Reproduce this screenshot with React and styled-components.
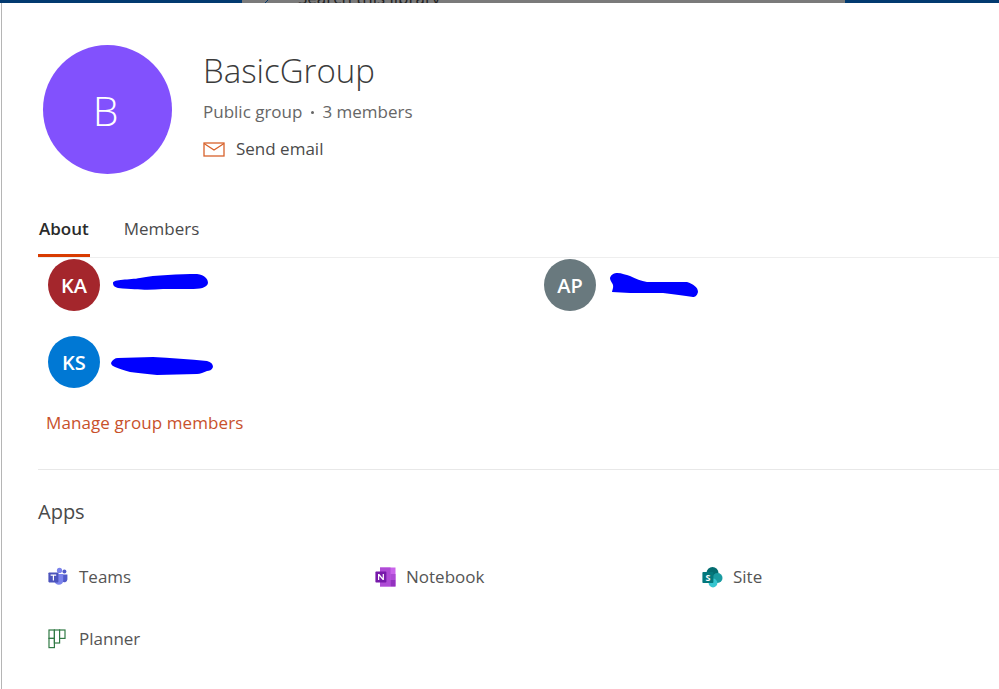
import React from "react";
import styled, { createGlobalStyle } from "styled-components";

const members = [
  { initials: "KA", color: "#a4262c", scribble: "M3 16 C3 12 20 13 30 11 C45 8 70 7 87 7 C95 8 98 12 98 16 C97 21 90 22 80 22 L53 22 C40 23 30 23 8 21 C4 20 3 18 3 16 Z" },
  { initials: "AP", color: "#69797e", scribble: "M4 11 C5 7 9 6 11 6 C16 6 20 8 24 9 C30 12 35 14 41 15 L81 15 C87 17 92 20 92 25 C91 29 89 30 87 30 C78 29 68 27 57 26 L24 26 L6 25 C7 21 8 19 6 16 C5 14 4 13 4 11 Z" },
  { initials: "KS", color: "#0078d4", scribble: "M1 19 C2 16 5 14 8 14 L43 13 C60 14 80 15 97 17 C101 18 103 20 103 23 C102 26 99 27 97 27 C94 28 90 30 87 30 L47 31 C37 30 28 29 20 28 C14 26 9 25 5 23 C3 22 1 21 1 19 Z" },
];

const apps = ["Teams", "Notebook", "Site", "Planner"];

export default function App() {
  return (
    <>
      <GlobalStyle />
      <TopStrip>
        <DarkBlock $width="242px" />
        <SearchBlock>
          <SearchChevron viewBox="0 0 8 3">
            <path d="M1 3 L4 0" stroke="#023a70" strokeWidth="1" fill="none" />
          </SearchChevron>
          <SearchText>Search this library</SearchText>
        </SearchBlock>
        <DarkBlock $width="154px" />
      </TopStrip>

      <Panel>
        <Header>
          <GroupAvatar>B</GroupAvatar>
          <GroupInfo>
            <GroupName>BasicGroup</GroupName>
            <GroupMeta>
              Public group
              <MetaDot />
              3 members
            </GroupMeta>
            <EmailRow>
              <MailIcon />
              Send email
            </EmailRow>
          </GroupInfo>
        </Header>

        <Tabs>
          <Tab $active>About</Tab>
          <Tab>Members</Tab>
        </Tabs>

        <MemberGrid>
          {members.map((m) => (
            <Member key={m.initials}>
              <MemberAvatar $color={m.color}>{m.initials}</MemberAvatar>
              <Scribble viewBox="0 0 110 32">
                <path d={m.scribble} fill="#0000ff" />
              </Scribble>
            </Member>
          ))}
        </MemberGrid>
        <ManageLink>Manage group members</ManageLink>

        <Divider />

        <AppsTitle>Apps</AppsTitle>
        <AppGrid>
          {apps.map((name) => (
            <AppItem key={name}>
              <AppIconSlot>
                <AppIcon name={name} />
              </AppIconSlot>
              {name}
            </AppItem>
          ))}
        </AppGrid>
      </Panel>
    </>
  );
}

function MailIcon() {
  return (
    <svg width="22" height="15" viewBox="0 0 22 15" fill="none" stroke="#d8622b" strokeWidth="1.3">
      <rect x="1" y="1" width="20" height="13" />
      <path d="M1 1.5 L11 8 L21 1.5" />
    </svg>
  );
}

function AppIcon({ name }) {
  if (name === "Teams") {
    return (
      <svg width="20" height="20" viewBox="0 0 20 20">
        <circle cx="11.5" cy="3.4" r="2.6" fill="#7b83eb" />
        <circle cx="16.4" cy="4.6" r="2" fill="#5059c9" />
        <path d="M14 7.4 H19.4 V12.6 A3 3 0 0 1 14 14 Z" fill="#5059c9" />
        <path d="M6.5 7 H15.2 V14 A4.4 4.4 0 0 1 6.5 14 Z" fill="#7b83eb" />
        <rect x="0.4" y="5.4" width="10" height="10" rx="0.8" fill="#4b53bc" />
        <path d="M2.6 7.6 H8.2 V8.8 H6 V13.4 H4.8 V8.8 H2.6 Z" fill="#fff" />
      </svg>
    );
  }
  if (name === "Notebook") {
    return (
      <svg width="21" height="20" viewBox="0 0 21 20">
        <rect x="5" y="0.5" width="15.5" height="19" fill="#ca64ea" />
        <rect x="5" y="0.5" width="10.5" height="19" fill="#ae4bd5" />
        <rect x="15.5" y="7" width="5" height="6" fill="#ae4bd5" />
        <rect x="15.5" y="13" width="5" height="6.5" fill="#9332bf" />
        <rect x="0.4" y="4.6" width="11" height="11" rx="0.8" fill="#7719aa" />
        <path d="M3 13 V7 H4.3 L7.7 11 V7 H8.9 V13 H7.7 L4.2 9 V13 Z" fill="#fff" />
      </svg>
    );
  }
  if (name === "Site") {
    return (
      <svg width="21" height="21" viewBox="0 0 21 21">
        <circle cx="10.5" cy="6" r="6" fill="#036c70" />
        <circle cx="15.5" cy="11" r="5" fill="#1a9ba1" />
        <circle cx="11" cy="16" r="4.4" fill="#37c6d0" />
        <rect x="0.4" y="5" width="11" height="11" rx="0.8" fill="#03787c" />
        <text x="3.4" y="13.6" fontSize="9" fontWeight="700" fill="#fff" fontFamily="'Open Sans', sans-serif">S</text>
      </svg>
    );
  }
  return (
    <svg width="18" height="20" viewBox="0 0 18 20" fill="#fff" stroke="#317a45" strokeWidth="1.2">
      <rect x="1" y="1" width="5.4" height="8.4" />
      <rect x="1" y="9.4" width="5.4" height="9.2" />
      <rect x="6.4" y="1" width="5.2" height="13" />
      <rect x="11.6" y="1" width="5.4" height="8.4" />
    </svg>
  );
}

const GlobalStyle = createGlobalStyle`
  html, body {
    margin: 0;
    height: 100%;
    overflow: hidden;
    background: #fff;
  }
  body {
    font-family: "Open Sans", "Noto Sans", sans-serif;
    color: #4a4a4a;
  }
`;

const TopStrip = styled.div`
  display: flex;
  height: 3px;
  overflow: hidden;
`;

const DarkBlock = styled.div`
  width: ${(p) => p.$width};
  flex: none;
  background: #023a70;
`;

const SearchBlock = styled.div`
  flex: 1;
  display: flex;
  align-items: flex-end;
  padding-left: 22px;
  background: #7a7a7a;
`;

const SearchChevron = styled.svg`
  width: 8px;
  height: 3px;
  flex: none;
  margin-right: 26px;
`;

const SearchText = styled.span`
  flex: none;
  font-size: 17px;
  line-height: 16px;
  margin-bottom: -3px;
  color: #1f1f1f;
`;

const Panel = styled.main`
  height: 686px;
  box-sizing: border-box;
  overflow: hidden;
  margin-left: 1px;
  border-left: 1px solid #b5b5b5;
  background: #fff;
  padding-left: 36px;
`;

const Header = styled.header`
  display: flex;
  gap: 31px;
  padding: 42px 0 0 5px;
`;

const GroupAvatar = styled.div`
  width: 129px;
  height: 129px;
  flex: none;
  box-sizing: border-box;
  padding-right: 4px;
  border-radius: 50%;
  background: #8251fd;
  color: #fff;
  display: flex;
  align-items: center;
  justify-content: center;
  font-size: 41px;
  font-weight: 300;
`;

const GroupInfo = styled.div`
  display: flex;
  flex-direction: column;
  padding-top: 2px;
`;

const GroupName = styled.h1`
  margin: 0;
  font-size: 33px;
  line-height: 48px;
  font-weight: 300;
  color: #3b3b3b;
`;

const GroupMeta = styled.div`
  display: flex;
  align-items: center;
  font-size: 17px;
  line-height: 24px;
  margin-top: 5px;
  color: #666;
`;

const MetaDot = styled.span`
  width: 3px;
  height: 3px;
  margin: 1px 8px 0 9px;
  border-radius: 50%;
  background: #666;
`;

const EmailRow = styled.div`
  display: flex;
  align-items: center;
  gap: 11px;
  font-size: 17px;
  line-height: 24px;
  margin-top: 13px;
  color: #4a4a4a;
`;

const Tabs = styled.nav`
  display: flex;
  gap: 33px;
  margin-top: 29px;
  border-bottom: 1px solid #eee;
  height: 55px;
  box-sizing: border-box;
  align-items: flex-start;
`;

const Tab = styled.div`
  height: 54px;
  box-sizing: border-box;
  padding: 14px 1px 0;
  font-size: 17px;
  line-height: 24px;
  font-weight: ${(p) => (p.$active ? 600 : 400)};
  color: ${(p) => (p.$active ? "#2b2b2b" : "#4a4a4a")};
  border-bottom: 3px solid ${(p) => (p.$active ? "#d83b01" : "transparent")};
`;

const MemberGrid = styled.div`
  display: grid;
  grid-template-columns: 496px 1fr;
  row-gap: 25px;
  padding: 1px 0 0 10px;
`;

const Member = styled.div`
  display: flex;
  align-items: center;
  gap: 10px;
  height: 52px;
`;

const MemberAvatar = styled.div`
  width: 52px;
  height: 52px;
  flex: none;
  border-radius: 50%;
  background: ${(p) => p.$color};
  color: #fff;
  display: flex;
  align-items: center;
  justify-content: center;
  font-size: 20px;
  font-weight: 600;
`;

const Scribble = styled.svg`
  width: 110px;
  height: 32px;
  margin-top: -4px;
`;

const ManageLink = styled.a`
  display: block;
  margin: 23px 0 0 8px;
  font-size: 17px;
  line-height: 24px;
  letter-spacing: 0.1px;
  color: #c8512b;
`;

const Divider = styled.hr`
  margin: 34px 0 0;
  border: 0;
  border-top: 1px solid #e8e8e8;
`;

const AppsTitle = styled.h2`
  margin: 26px 0 0;
  font-size: 20px;
  line-height: 32px;
  font-weight: 400;
  color: #4a4a4a;
`;

const AppGrid = styled.div`
  display: grid;
  grid-template-columns: repeat(3, 327px);
  grid-auto-rows: 62px;
  margin: 37px 0 0 10px;
`;

const AppItem = styled.div`
  display: flex;
  align-items: center;
  height: 24px;
  font-size: 17px;
  line-height: 24px;
  color: #555;
`;

const AppIconSlot = styled.span`
  width: 31px;
  flex: none;
  display: flex;
  align-items: center;
`;
